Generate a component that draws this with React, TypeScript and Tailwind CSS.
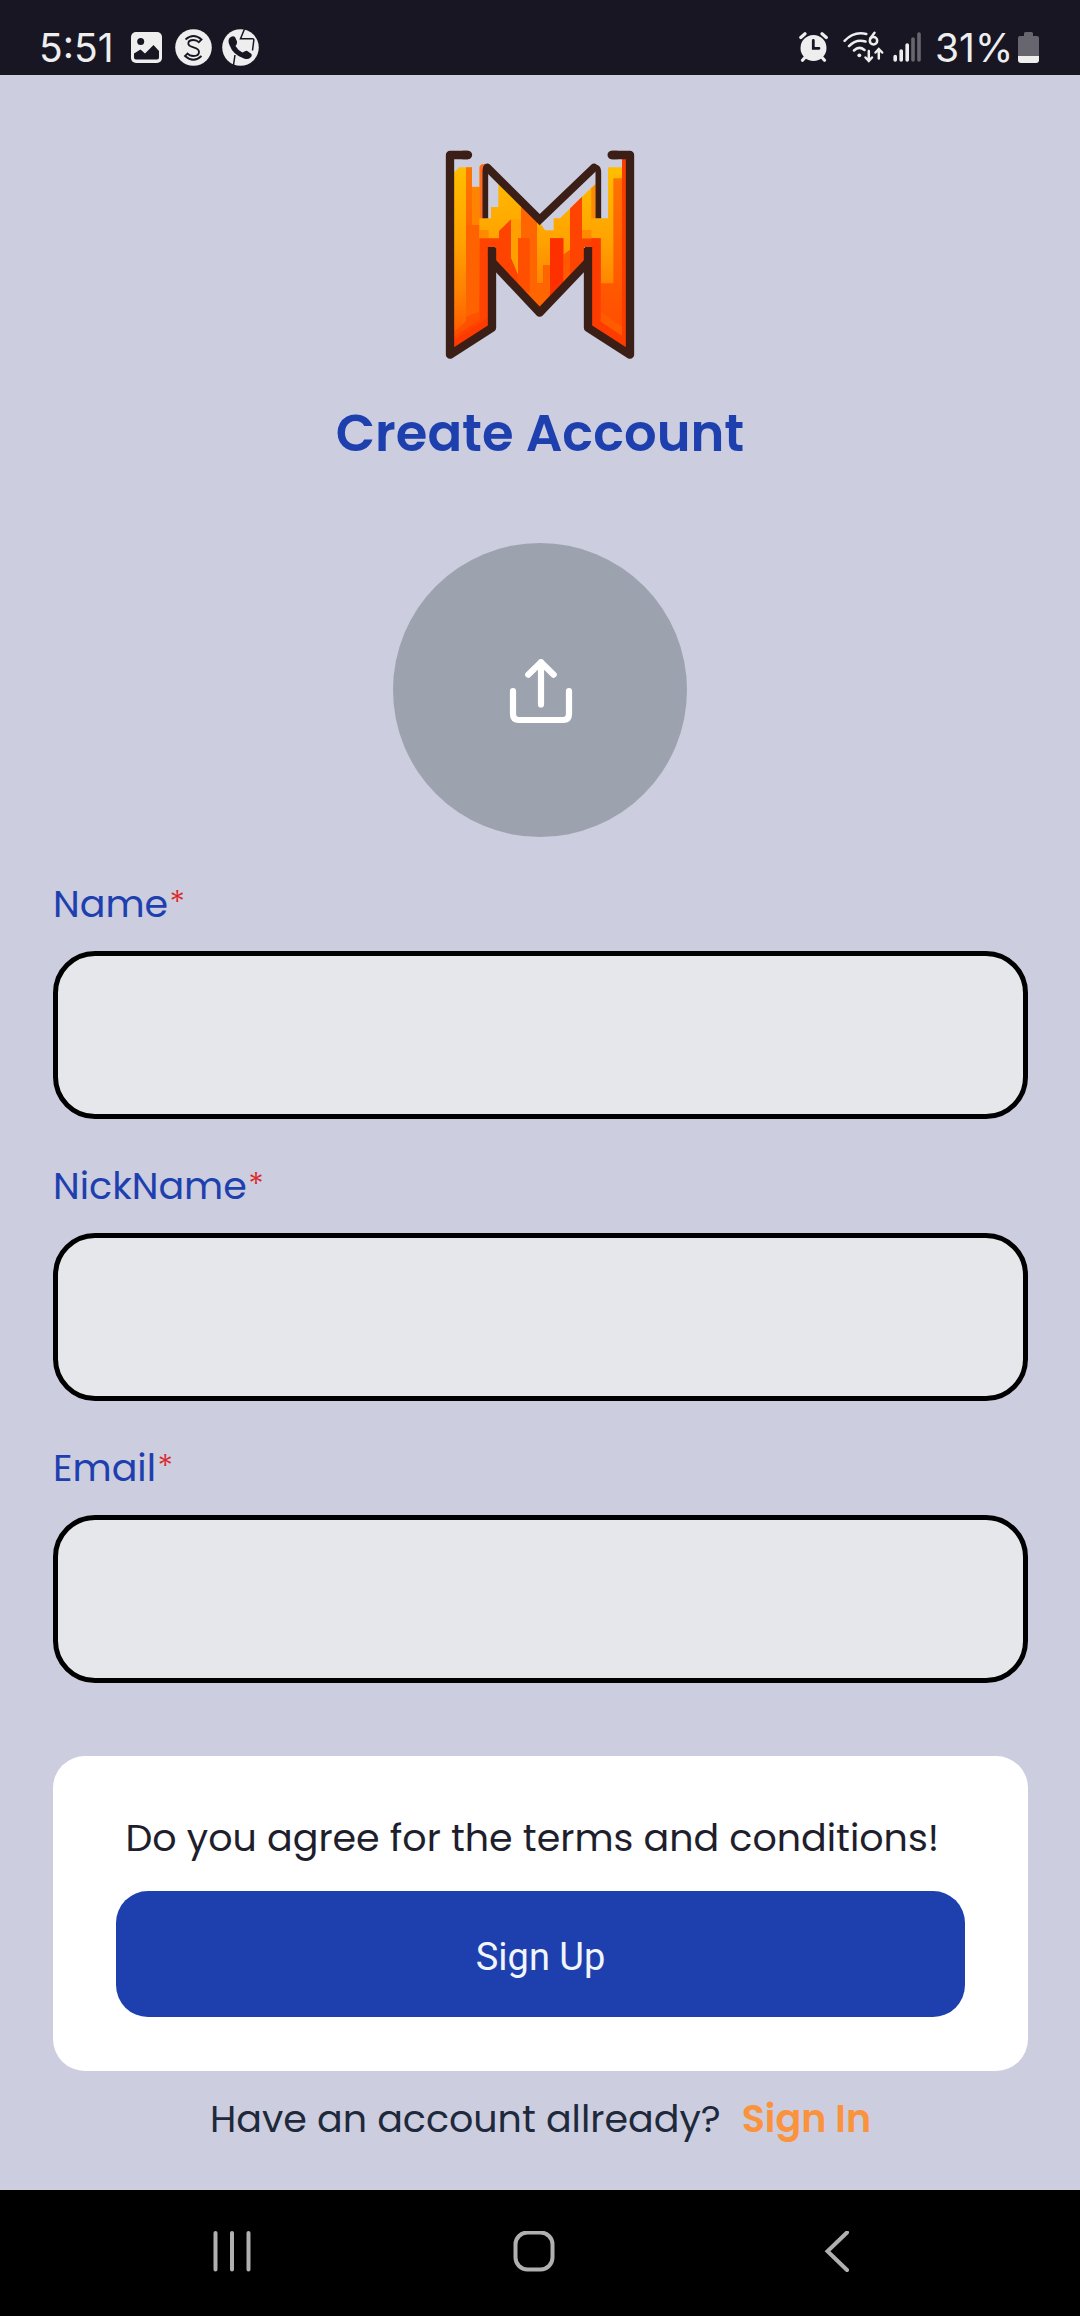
function PictureIcon() {
  return (
    <svg className="ml-[21px] h-[31px] w-[31px]" viewBox="0 0 31 31">
      <rect width="31" height="31" rx="5" fill="#eeeeef" />
      <circle cx="9.7" cy="9.6" r="3.5" fill="#171622" />
      <path d="M3 21.5 9.5 17.5 14 21.5 22.5 13 28 19V25.5Q28 27.5 26 27.5H5Q3 27.5 3 25.5Z" fill="#171622" />
    </svg>
  );
}

function SCircleIcon() {
  return (
    <svg className="ml-[13px] h-[37px] w-[37px]" viewBox="0 0 37 37" fill="none" stroke="#171622" strokeWidth="1.8">
      <circle cx="18.5" cy="18.5" r="18.3" fill="#eeeeef" stroke="none" />
      <path d="M10.5 10.5Q18.5 3.5 26.5 10.5L23.8 13.2Q22 11 18.5 11Q13.3 11 13.3 14.5Q13.3 17 18.5 18.3Q24 19.7 24 23Q24 27 18.5 27Q14.5 27 12.5 24.5L10 27Q18.5 34.5 26.5 27" />
    </svg>
  );
}

function CallCircleIcon() {
  return (
    <svg className="ml-[10px] h-[37px] w-[37px]" viewBox="0 0 37 37">
      <circle cx="18.5" cy="18.5" r="18.3" fill="#eeeeef" />
      <path d="M22.5 0 18.5 9.7H30.5Q32 9.7 31.8 11.5L30.5 21.5M13 26 11.5 36" fill="none" stroke="#171622" strokeWidth="1.5" />
      <path d="M7.5 9Q10.5 6 13 8L15 12.5Q15.5 14.5 13.5 17Q16 21.500 20.5 23.5L23.5 22Q25 21.5 26 22.5L29.5 25Q30.5 27 28.5 28.5Q26 31 22 29.5Q11 26 7.5 16Q5.5 11.5 7.5 9Z" fill="#171622" />
    </svg>
  );
}

function AlarmIcon() {
  return (
    <svg className="h-[30px] w-[30px]" viewBox="0 0 30 30" fill="none" stroke="#eeeeef" strokeLinecap="round">
      <circle cx="14.5" cy="16" r="13" fill="#eeeeef" stroke="none" />
      <path d="M1.8 5.5 6 1.8M27.3 5.5 23 1.8M5.5 26 3.5 28.3M23.5 26 25.5 28.3" strokeWidth="3.2" />
      <path d="M14.3 8.5V16.3H20" stroke="#171622" strokeWidth="2.8" />
    </svg>
  );
}

function WifiIcon() {
  return (
    <svg className="ml-[14px] h-[32px] w-[42px]" viewBox="0 0 42 32" fill="none" stroke="#eeeeef" strokeWidth="2.5" strokeLinecap="round">
      <path d="M1.6 9.8Q11 0 23.3 3M6 15.2Q13 7.500 22.500 10.500M11 19.5Q16 14.5 21.5 19" />
      <circle cx="16.3" cy="24.3" r="1.9" fill="#eeeeef" stroke="none" />
      <path d="M31.500 1.800 27.200 7.500" />
      <circle cx="30.500" cy="9.800" r="3.700" />
      <path d="M25.8 20V29.5M22.5 26.5 25.8 30 29 26.5M35.8 27.5V18.5M32.5 21.5 35.8 18 39.2 21.5" />
    </svg>
  );
}

function SignalIcon() {
  return (
    <svg className="ml-[8px] h-[30px] w-[28px]" viewBox="0 0 28 30" strokeWidth="3.6" strokeLinecap="round">
      <path d="M2.2 24.5V28M8.2 19V28M14.2 13V28" stroke="#eeeeef" />
      <path d="M20 7V28M26 2V28" stroke="#67666f" />
    </svg>
  );
}

function BatteryIcon() {
  return (
    <svg className="h-[31px] w-[21px]" viewBox="0 0 21 31">
      <path d="M6 1.5Q6 0 7.5 0H13.5Q15 0 15 1.5V4H19Q21 4 21 6V24H0V6Q0 4 2 4H6Z" fill="#67666f" />
      <path d="M0 24H21V28Q21 31 18 31H3Q0 31 0 28Z" fill="#eeeeef" />
    </svg>
  );
}

function StatusBar() {
  return (
    <header className="flex h-[75px] items-center justify-between bg-[#171622] pt-[19px] pr-[41px] pl-[39px] font-['Inter',sans-serif] text-[39px] leading-none font-normal text-[#eeeeef]">
      <div className="flex items-center">
        <span className="w-[71px] whitespace-nowrap">5:51</span>
        <PictureIcon />
        <SCircleIcon />
        <CallCircleIcon />
      </div>
      <div className="flex items-center">
        <AlarmIcon />
        <WifiIcon />
        <SignalIcon />
        <span className="ml-[14px] w-[83px] whitespace-nowrap">31%</span>
        <BatteryIcon />
      </div>
    </header>
  );
}

function Logo() {
  return (
    <svg className="mt-[60px] h-[235px] w-[220px] shrink-0" viewBox="0 0 660 705" role="img" aria-label="M">
      <defs>
        <linearGradient id="flame" gradientUnits="userSpaceOnUse" x1="0" y1="90" x2="0" y2="600">
          <stop offset="0" stopColor="#ffbf00" />
          <stop offset="0.45" stopColor="#ffa200" />
          <stop offset="0.75" stopColor="#ff8000" />
          <stop offset="1" stopColor="#ff5a00" />
        </linearGradient>
        <linearGradient id="ember" gradientUnits="userSpaceOnUse" x1="0" y1="90" x2="0" y2="560">
          <stop offset="0" stopColor="#ff7600" />
          <stop offset="1" stopColor="#ff5000" />
        </linearGradient>
        <clipPath id="body">
          <path d="M70 115 88 97H126V155H148V96Q152 86 166 86V250H183V216H205V146L329 262 345 286H371V250H390L456 185 497 146V250H534V97H576V70H590V642L484 572V336H462V378L329 517 196 378V336H174V572L70 642Z" />
        </clipPath>
      </defs>
      <g clipPath="url(#body)">
        <rect x="60" y="60" width="540" height="600" fill="url(#flame)" />
        <path d="M108 90H126V515L148 495V590L60 650V600L108 560Z" fill="url(#ember)" />
        <path d="M126 155H148V270H126Z" fill="#ff8500" />
        <path d="M126 270H148V530L108 545V270Z" fill="#ff6200" />
        <path d="M148 86H170V250H148Z" fill="#ff6a20" />
        <path d="M148 285H176V310H148Z" fill="#ff8a00" />
        <path d="M148 310H207V288L243 253V370L264 415V310H273V216L320 262V445H340V390H360V310H400V360L420 345V216L456 180V310H512V590L600 640V660L484 580H462V378L329 517 196 378V345H176V575L60 655V612L148 556Z" fill="#ff4300" />
        <path d="M243 253H273V310H264V420L243 365Z" fill="#ffa000" />
        <path d="M273 200 320 250V445H340V390H360V480L329 517 264 460 298 470V310H273Z" fill="#ff6500" />
        <path d="M298 475V310H264V455Z" fill="#ff5000" />
        <path d="M360 310H400V450L360 490Z" fill="#ff3000" />
        <path d="M400 360 420 345V430L400 440Z" fill="#ff5a00" />
        <path d="M484 160 497 146V250H484Z" fill="#ff8a00" />
        <path d="M456 285H484V310H456Z" fill="#ff8a00" />
        <path d="M512 445H550V130H576V600L512 560Z" fill="url(#ember)" />
        <path d="M512 530 576 575V635L484 575V545Z" fill="#ff5c00" />
        <path d="M484 310H512V560L576 602V70H590V645L484 573Z" fill="#ff3c00" />
        <path d="M60 625 174 548V575L60 650Z" fill="#ff3a00" />
      </g>
      <g fill="none" stroke="#3b1f17" strokeWidth="25" strokeLinejoin="round">
        <path d="M114 60H60V659L186 578V360M545 60H600V659L474 578V360" />
        <path d="M114 60H100M545 60H560" strokeLinecap="round" />
        <path d="M173.500 336V362H198.500V340L194 336ZM461.500 362V340L466 336H486.500V362Z" fill="#3b1f17" stroke="none" />
        <path d="M188 383 329 533 472 383" />
        <path d="M166 250V110Q166 90 178 101M484 101Q504 90 505 110V250" strokeWidth="17" />
        <path d="M172 98 329 254 492 98" strokeWidth="24" strokeLinecap="round" strokeLinejoin="miter" />
      </g>
    </svg>
  );
}

function UploadIcon() {
  return (
    <svg className="mt-[1px] h-[66px] w-[64px]" viewBox="0 0 64 66" fill="none" stroke="#ffffff" strokeWidth="6.2" strokeLinecap="round" strokeLinejoin="round">
      <path d="M4 33V56Q4 62 10 62H54Q60 62 60 56V33" />
      <path d="M32 46.5V4M19.2 16.700 32 4.200 44.7 16.700" />
    </svg>
  );
}

function Field({ label }: { label: string }) {
  return (
    <label className="mt-[39px] block">
      <span className="flex h-[56px] pl-[0.5px] text-[38px] leading-[56px] text-[#1e40af]">
        {label}
        <span className="pl-[1.5px] text-[33px] leading-[54px] font-light text-[#dc2626]">*</span>
      </span>
      <input className="mt-[19px] block h-[168px] w-full rounded-[42px] border-[5px] border-black bg-gray-200 px-8 text-[38px] outline-none" />
    </label>
  );
}

function NavBar() {
  return (
    <nav className="flex h-[126px] items-center bg-black">
      <svg className="ml-[210px] h-[44px] w-[44px]" viewBox="0 0 44 44" stroke="#b0b0b0" strokeWidth="4" strokeLinecap="round">
        <path d="M5.5 2V38.500M22 2V38.500M38.5 2V38.500" />
      </svg>
      <svg className="ml-[258px] h-[44px] w-[44px]" viewBox="0 0 44 44" fill="none" stroke="#b0b0b0" strokeWidth="4">
        <rect x="3.5" y="1.5" width="37" height="37" rx="12" />
      </svg>
      <svg className="ml-[266px] h-[44px] w-[30px]" viewBox="0 0 30 44" fill="none" stroke="#b0b0b0" strokeWidth="4" strokeLinecap="round">
        <path d="M25 1.5 5.5 20.2 25 39" />
      </svg>
    </nav>
  );
}

export default function App() {
  return (
    <div className="flex h-[2316px] w-[1080px] flex-col overflow-hidden bg-[#cccddf] font-['Poppins','Inter',sans-serif]">
      <StatusBar />
      <main className="flex flex-1 flex-col items-center">
        <Logo />
        <h1 className="mt-[25px] text-[51.2px] leading-[76px] font-semibold text-[#1e40af]">Create Account</h1>
        <button className="mt-[72px] flex h-[294px] w-[294px] shrink-0 items-center justify-center rounded-full bg-[#9ca3af] pl-[2px]" aria-label="Upload photo">
          <UploadIcon />
        </button>
        <form className="w-[975px]">
          <Field label="Name" />
          <Field label="NickName" />
          <Field label="Email" />
          <section className="mt-[73px] rounded-[32px] bg-white px-[63px] py-[54px]">
            <p className="pl-[10px] text-[38px] leading-[56px] whitespace-nowrap text-[#1e1e2d]">Do you agree for the terms and conditions!</p>
            <button type="button" className="mt-[25px] flex h-[126px] w-full items-center justify-center rounded-[32px] bg-[#1e40af] pt-[6px] pl-[1px] font-['Roboto',sans-serif] text-[38px] leading-[50px] text-slate-100">
              Sign Up
            </button>
          </section>
        </form>
        <p className="mt-[20px] flex gap-[21px] pl-[1px] text-[38px] leading-[56px] whitespace-nowrap text-[#1e293b]">
          Have an account allready?
          <a className="font-semibold text-[#fb923c]">Sign In</a>
        </p>
      </main>
      <NavBar />
    </div>
  );
}
